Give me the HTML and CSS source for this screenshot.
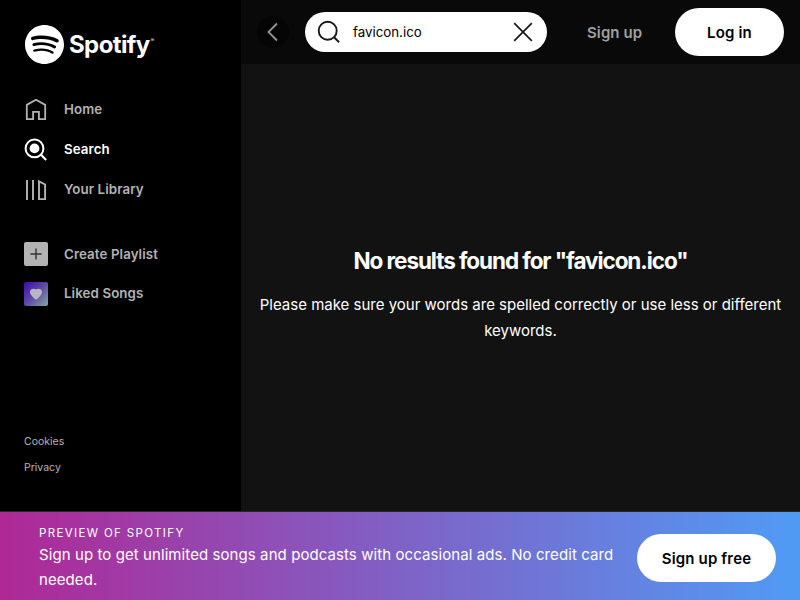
FILE: index.html
```html
<!DOCTYPE html>
<html lang="en">
<head>
<meta charset="utf-8">
<title>Spotify – Search</title>
<link rel="stylesheet" href="styles.css">
</head>
<body>
<div class="app">
  <nav class="sidebar">
    <a class="logo">
      <svg class="logo-mark" viewBox="0 0 24 24"><path fill="currentColor" d="M12 0C5.4 0 0 5.4 0 12s5.4 12 12 12 12-5.4 12-12S18.66 0 12 0zm5.521 17.34c-.24.359-.66.48-1.021.24-2.82-1.74-6.36-2.101-10.561-1.141-.418.122-.779-.179-.899-.539-.12-.421.18-.78.54-.9 4.56-1.021 8.52-.6 11.64 1.32.42.18.479.659.301 1.02zm1.44-3.3c-.301.42-.841.6-1.262.3-3.239-1.98-8.159-2.58-11.939-1.38-.479.12-1.02-.12-1.14-.6-.12-.48.12-1.021.6-1.141C9.6 9.9 15 10.561 18.72 12.84c.361.181.54.78.241 1.2zm.12-3.36C15.24 8.4 8.82 8.16 5.16 9.301c-.6.179-1.2-.181-1.38-.721-.18-.601.18-1.2.72-1.381 4.26-1.26 11.28-1.02 15.721 1.621.539.3.719 1.02.419 1.56-.299.421-1.02.599-1.559.3z"/></svg>
      <span class="wordmark">Spotify</span><span class="registered">®</span>
    </a>
    <ul class="menu">
      <li class="menu-item"><svg class="icon" viewBox="0 0 24 24"><path d="M2.800 22.200V7.900L12 2.800l9.200 5.100v14.300h-6.300v-7.400H9.100v7.400z" fill="none" stroke="currentColor" stroke-width="1.800"/></svg><span>Home</span></li>
      <li class="menu-item active"><svg class="icon" viewBox="0 0 24 24"><circle cx="10.500" cy="11.400" r="8.900" fill="none" stroke="currentColor" stroke-width="2"/><circle cx="10.500" cy="11.400" r="4.900" fill="currentColor"/><path d="M16.600 17.300l5.500 5.600" stroke="currentColor" stroke-width="2.100"/></svg><span>Search</span></li>
      <li class="menu-item"><svg class="icon" viewBox="0 0 24 24"><path d="M3 3v20M9 3v20M15 4.400v17.700h6.100V7.500z" fill="none" stroke="currentColor" stroke-width="1.900"/></svg><span>Your Library</span></li>
    </ul>
    <ul class="menu playlists">
      <li class="menu-item"><span class="tile tile-add"><svg viewBox="0 0 12 12"><path d="M6 .5v11M.5 6h11" stroke="currentColor" stroke-width="1.400"/></svg></span><span>Create Playlist</span></li>
      <li class="menu-item liked"><span class="tile tile-liked"><svg viewBox="0 0 12 12"><path fill="currentColor" d="M6 11.800C4.800 10.700 0 7 0 3.900 0 .6 4.200-.1 6 1.500 7.800-.1 12 .6 12 3.900 12 7 7.200 10.700 6 11.800z"/></svg></span><span class="label">Liked Songs</span></li>
    </ul>
    <div class="legal"><a>Cookies</a><a>Privacy</a></div>
  </nav>
  <div class="main">
    <header class="topbar">
      <button class="back"><svg viewBox="0 0 24 24"><path d="M16 3.500L7.500 12l8.500 8.500" fill="none" stroke="currentColor" stroke-width="1.800"/></svg></button>
      <div class="search">
        <svg class="search-icon" viewBox="0 0 24 24"><circle cx="10.700" cy="10.700" r="9" fill="none" stroke="currentColor" stroke-width="1.900"/><path d="M16.800 17l5.300 5.200" stroke="currentColor" stroke-width="1.900"/></svg>
        <span class="query">favicon.ico</span>
        <svg class="clear" viewBox="0 0 24 24"><path d="M3.200 3.200l17.600 17.600M20.800 3.200L3.200 20.800" stroke="currentColor" stroke-width="1.700"/></svg>
      </div>
      <a class="signup"><span>Sign up</span></a>
      <button class="pill login"><span>Log in</span></button>
    </header>
    <main class="empty">
      <h1><span>No results found for "favicon.ico"</span></h1>
      <p><span>Please make sure your words are spelled correctly or use less or different keywords.</span></p>
    </main>
  </div>
  <footer class="banner">
    <div class="banner-text">
      <p class="eyebrow"><span>Preview of Spotify</span></p>
      <p class="pitch">Sign up to get unlimited songs and podcasts with occasional ads. No credit card needed.</p>
    </div>
    <button class="pill free"><span>Sign up free</span></button>
  </footer>
</div>
</body>
</html>
```
FILE: styles.css
```css
* { box-sizing: border-box; margin: 0; padding: 0; }
body { font-family: Inter, "Liberation Sans", sans-serif; background: #121212; color: #fff; }
button { border: 0; font: inherit; }
svg { display: block; flex: none; }
.app { display: grid; grid-template: 511px 89px / 241px 559px; width: 800px; height: 600px; overflow: hidden; }
.sidebar { background: #000; display: flex; flex-direction: column; padding: 24px 0 30px 24px; color: #b3b3b3; }
.logo { display: flex; align-items: center; height: 40px; color: #fff; }
.logo-mark { width: 39px; height: 39px; margin-left: 1px; }
.wordmark { font-size: 24px; font-weight: 650; letter-spacing: -0.6px; margin-left: 5px; line-height: 40px; padding-top: 2px; }
.registered { font-size: 5px; align-self: flex-start; margin: 13px 0 0 1px; }
.menu { list-style: none; margin-top: 25px; }
.menu-item { display: flex; align-items: center; gap: 16px; height: 40px; font-size: 13.3px; letter-spacing: 0.1px; font-weight: 600; white-space: nowrap; }
.active { color: #fff; }
.liked .label { padding-bottom: 2px; }
.icon { width: 24px; height: 24px; }
.playlists { margin-top: 25px; }
.tile { width: 24px; height: 24px; border-radius: 2px; display: grid; place-items: center; }
.tile svg { width: 12px; height: 12px; }
.tile-add { background: #b3b3b3; color: #333; }
.tile-liked { background: linear-gradient(135deg, #3a0bad, #5f4ba5 50%, #82aaa0); color: #bbb6c4; }
.legal { margin-top: auto; display: flex; flex-direction: column; font-size: 10.5px; line-height: 26px; }
.main { display: flex; flex-direction: column; background: #121212; }
.topbar { height: 64px; flex: none; display: flex; align-items: center; background: #090909; padding: 0 16px; }
.back { width: 32px; height: 32px; border-radius: 50%; background: #050505; color: #959595; display: grid; place-items: center; }
.back svg { width: 24px; height: 24px; }
.search { width: 242px; height: 40px; margin-left: 16px; border-radius: 20px; background: #fff; color: #181818; display: flex; align-items: center; padding: 0 12px; }
.search-icon, .clear { width: 24px; height: 24px; }
.query { font-size: 13.3px; margin-left: 12px; flex: 1; color: #000; }
.signup { margin-left: 40px; width: 56px; color: #a0a0a0; font-size: 15px; letter-spacing: 0.1px; font-weight: 600; white-space: nowrap; }
.pill { height: 48px; border-radius: 24px; background: #fff; color: #000; font-size: 15px; letter-spacing: 0.15px; font-weight: 600; white-space: nowrap; }
.login { margin-left: auto; width: 109px; }
.empty { flex: 1; display: flex; flex-direction: column; align-items: center; padding: 183px 16px 0; text-align: center; }
.empty h1 { font-size: 22.5px; font-weight: 700; line-height: 28px; letter-spacing: -1.08px; white-space: nowrap; }
.empty p { font-size: 15px; line-height: 26px; margin-top: 17px; }
.banner { grid-column: 1 / -1; background: linear-gradient(90deg, #af2896, #509bf5); display: flex; align-items: center; justify-content: space-between; padding: 0 24px 0 39px; border-top: 1px solid #282828; }
.banner-text { width: 582px; padding-top: 4px; }
.eyebrow { font-size: 11.5px; letter-spacing: 1.35px; text-transform: uppercase; line-height: 17px; }
.pitch { font-size: 15px; letter-spacing: 0.08px; line-height: 25px; }
.free { width: 139px; margin-top: 4px; }
```
